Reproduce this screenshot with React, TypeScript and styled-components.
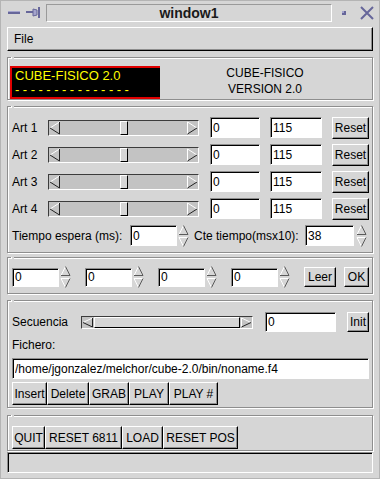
import React from 'react';
import styled, { createGlobalStyle } from 'styled-components';

const GRAY = '#d6d6d6';
const SHADOW = '#8e8e8e';
const WM = '#66669a';

const GlobalStyle = createGlobalStyle`
  html, body {
    margin: 0;
    padding: 0;
    background: ${GRAY};
  }
  body {
    font-family: "Liberation Sans", Arial, sans-serif;
    font-size: 12px;
    color: #000;
  }
`;

const Window = styled.div`
  width: 380px;
  height: 479px;
  box-sizing: border-box;
  background: ${GRAY};
  border: 1px solid #b4b4b4;
  display: flex;
  flex-direction: column;
`;

const TitleBar = styled.div`
  height: 23px;
  display: flex;
  align-items: center;
  padding-left: 7px;
`;

const IconSlot = styled.span<{ $ml: number }>`
  display: flex;
  margin-left: ${p => p.$ml}px;
`;

const TitleBox = styled.div`
  box-sizing: border-box;
  width: 286px;
  height: 18px;
  margin-left: 5px;
  border: 1px solid;
  border-color: #9a9a9a #fff #fff #9a9a9a;
  display: flex;
  align-items: center;
  justify-content: center;
  font-weight: bold;
  font-size: 14px;
  color: #1a1a1a;
`;

const Body = styled.div`
  display: flex;
  flex-direction: column;
  padding: 3px 6px 0;
`;

const MenuBar = styled.div`
  box-sizing: border-box;
  height: 24px;
  display: flex;
  align-items: center;
  padding-left: 6px;
  border: 1px solid;
  border-color: #fff #000 #000 #fff;
  box-shadow: inset -1px -1px 0 ${SHADOW};
`;

const Frame = styled.div<{ $mt: number; $h: number; $pt: number; $pl?: number }>`
  position: relative;
  box-sizing: border-box;
  margin-top: ${p => p.$mt}px;
  height: ${p => p.$h}px;
  padding: ${p => p.$pt}px 2px 0 ${p => p.$pl ?? 4}px;
  border: 1px solid ${SHADOW};
  box-shadow: inset 1px 1px 0 #fff, 1px 1px 0 #fff;
  display: flex;
  flex-direction: column;

  &::before {
    content: '';
    position: absolute;
    top: -1px;
    left: 3px;
    width: 2px;
    height: 2px;
    background: ${GRAY};
    border-left: 1px solid #fff;
  }
`;

const BannerRow = styled.div`
  display: flex;
  align-items: flex-start;
`;

const LedBox = styled.div`
  box-sizing: border-box;
  width: 150px;
  height: 33px;
  background: #000;
  border: 2px solid #e00000;
  border-right: none;
  padding: 1px 0 0 3px;
  color: #ffff00;
  font-size: 13px;
  line-height: 14px;
  white-space: nowrap;
`;

const Dashes = styled.div`
  letter-spacing: 3.5px;
`;

const VersionText = styled.div`
  flex: 1;
  margin-top: -1px;
  text-align: center;
  line-height: 16px;
`;

const Rows = styled.div<{ $gap: number }>`
  display: flex;
  flex-direction: column;
  gap: ${p => p.$gap}px;
`;

const Row = styled.div<{ $h: number }>`
  display: flex;
  align-items: center;
  height: ${p => p.$h}px;
`;

const Label = styled.span<{ $w?: number; $ml?: number }>`
  flex-shrink: 0;
  ${p => (p.$w ? `width: ${p.$w}px;` : '')}
  margin-left: ${p => p.$ml ?? 0}px;
  white-space: nowrap;
`;

const FieldLabel = styled.div`
  height: 26px;
  display: flex;
  align-items: center;
`;

const Entry = styled.input<{ $w: number; $h?: number; $ml?: number }>`
  box-sizing: border-box;
  flex-shrink: 0;
  width: ${p => p.$w}px;
  height: ${p => p.$h ?? 21}px;
  margin: 0 0 0 ${p => p.$ml ?? 0}px;
  padding: 0 0 0 2px;
  background: #fff;
  border: 1px solid;
  border-color: ${SHADOW} #fff #fff ${SHADOW};
  box-shadow: inset 1px 1px 0 #000;
  font-family: inherit;
  font-size: 12px;
  color: #000;
  outline: none;
`;

const Button = styled.button<{ $w: number; $h?: number; $ml?: number }>`
  box-sizing: border-box;
  flex-shrink: 0;
  width: ${p => p.$w}px;
  height: ${p => p.$h ?? 22}px;
  margin: 0 0 0 ${p => p.$ml ?? 0}px;
  padding: 0;
  background: ${GRAY};
  border: 1px solid;
  border-color: #fff #000 #000 #fff;
  box-shadow: inset -1px -1px 0 ${SHADOW};
  font-family: inherit;
  font-size: 12px;
  color: #000;
  white-space: nowrap;
  overflow: hidden;
`;

const ButtonStrip = styled.div<{ $mt?: number }>`
  display: flex;
  margin-top: ${p => p.$mt ?? 0}px;
`;

const Trough = styled.div<{ $w: number; $h: number }>`
  box-sizing: border-box;
  flex-shrink: 0;
  width: ${p => p.$w}px;
  height: ${p => p.$h}px;
  display: flex;
  background: #c3c3c3;
  border: 1px solid;
  border-color: #3c3c3c #fff #fff #3c3c3c;
`;

const Thumb = styled.div<{ $fill?: boolean }>`
  box-sizing: border-box;
  ${p => (p.$fill ? 'flex: 1;' : 'width: 8px;')}
  background: ${GRAY};
  border: 1px solid;
  border-color: #fff #000 #000 #fff;
`;

const Gap = styled.div`
  flex: 1;
`;

const StatusBar = styled.div`
  box-sizing: border-box;
  margin-top: 1px;
  height: 21px;
  border: 1px solid;
  border-color: ${SHADOW} #fff #fff ${SHADOW};
  box-shadow: inset 1px 1px 0 #000;
`;

const MinimizeIcon = () => (
  <svg width="12" height="4" viewBox="0 0 12 4">
    <rect x="0" y="0" width="12" height="3" fill={WM} />
    <rect x="0" y="0" width="12" height="1" fill="#a4a4cc" />
  </svg>
);

const PinIcon = () => (
  <svg width="15" height="11" viewBox="0 0 15 11">
    <rect x="0" y="4" width="7" height="2" fill={WM} />
    <polygon points="7,2 11,3 11,8 7,9" fill="#a4a4cc" stroke={WM} strokeWidth="1" />
    <rect x="12" y="0" width="2" height="11" fill={WM} />
  </svg>
);

const DotIcon = () => (
  <svg width="4" height="4" viewBox="0 0 4 4">
    <rect x="0" y="0" width="4" height="4" fill={WM} />
    <rect x="0" y="0" width="2" height="2" fill="#a4a4cc" />
  </svg>
);

const CloseIcon = () => (
  <svg width="14" height="14" viewBox="0 0 14 14">
    <path d="M1 1 L13 13 M13 1 L1 13" stroke={WM} strokeWidth="2" />
  </svg>
);

const ArrowLeft = ({ h }: { h: number }) => {
  const m = h / 2;
  return (
    <svg width="12" height={h} viewBox={`0 0 12 ${h}`}>
      <path d={`M10.5 1 L1 ${m}`} stroke="#fff" strokeWidth="1" fill="none" />
      <path d={`M1 ${m} L10.5 ${h - 1} M10.5 1 L10.5 ${h - 1}`} stroke="#222" strokeWidth="1" fill="none" />
    </svg>
  );
};

const ArrowRight = ({ h }: { h: number }) => {
  const m = h / 2;
  return (
    <svg width="12" height={h} viewBox={`0 0 12 ${h}`}>
      <path d={`M1.5 ${h - 1} L1.5 1 L11 ${m}`} stroke="#fff" strokeWidth="1" fill="none" />
      <path d={`M11 ${m} L1.5 ${h - 1}`} stroke="#222" strokeWidth="1" fill="none" />
    </svg>
  );
};

const Slider = ({ w, h, fill }: { w: number; h: number; fill?: boolean }) => (
  <Trough $w={w} $h={h}>
    <ArrowLeft h={h - 2} />
    {fill ? (
      <Thumb $fill />
    ) : (
      <>
        <Gap />
        <Thumb />
        <Gap />
      </>
    )}
    <ArrowRight h={h - 2} />
  </Trough>
);

const SpinArrows = ({ ml }: { ml: number }) => (
  <IconSlot $ml={ml}>
    <svg width="11" height="24" viewBox="0 0 11 24">
      <polygon points="5.5,1.5 10,10.5 1,10.5" fill={GRAY} />
      <path d="M1 10.5 L5.5 1.5" stroke="#fff" strokeWidth="1" fill="none" />
      <path d="M5.5 1.5 L10 10.5 L1 10.5" stroke="#5a5a5a" strokeWidth="1" fill="none" />
      <polygon points="1,13.5 10,13.5 5.5,22.5" fill={GRAY} />
      <path d="M10 13.5 L1 13.5 L5.5 22.5" stroke="#fff" strokeWidth="1" fill="none" />
      <path d="M5.5 22.5 L10 13.5" stroke="#5a5a5a" strokeWidth="1" fill="none" />
    </svg>
  </IconSlot>
);

const arts = ['Art 1', 'Art 2', 'Art 3', 'Art 4'];
const seqButtons: [string, number][] = [
  ['Insert', 35],
  ['Delete', 42],
  ['GRAB', 40],
  ['PLAY', 40],
  ['PLAY #', 49],
];
const mainButtons: [string, number][] = [
  ['QUIT', 33],
  ['RESET 6811', 77],
  ['LOAD', 41],
  ['RESET POS', 75],
];

const App: React.FC = () => {
  return (
    <>
      <GlobalStyle />
      <Window>
        <TitleBar>
          <MinimizeIcon />
          <IconSlot $ml={6}>
            <PinIcon />
          </IconSlot>
          <TitleBox>window1</TitleBox>
          <IconSlot $ml={10}>
            <DotIcon />
          </IconSlot>
          <IconSlot $ml={14}>
            <CloseIcon />
          </IconSlot>
        </TitleBar>

        <Body>
          <MenuBar>File</MenuBar>

          <Frame $mt={6} $h={43} $pt={8} $pl={2}>
            <BannerRow>
              <LedBox>
                <div>CUBE-FISICO 2.0</div>
                <Dashes>---------------</Dashes>
              </LedBox>
              <VersionText>
                CUBE-FISICO
                <br />
                VERSION 2.0
              </VersionText>
            </BannerRow>
          </Frame>

          <Frame $mt={6} $h={147} $pt={10}>
            <Rows $gap={6}>
              {arts.map(name => (
                <Row $h={21} key={name}>
                  <Label $w={36}>{name}</Label>
                  <Slider w={151} h={16} />
                  <Entry $w={50} $ml={11} readOnly value="0" />
                  <Entry $w={52} $ml={10} readOnly value="115" />
                  <Button $w={37} $ml={10}>Reset</Button>
                </Row>
              ))}
              <Row $h={21}>
                <Label $w={118}>Tiempo espera (ms):</Label>
                <Entry $w={47} readOnly value="0" />
                <SpinArrows ml={1} />
                <Label $w={111} $ml={5}>Cte tiempo(msx10):</Label>
                <Entry $w={49} readOnly value="38" />
                <SpinArrows ml={2} />
              </Row>
            </Rows>
          </Frame>

          <Frame $mt={4} $h={37} $pt={9}>
            <Row $h={20}>
              {[0, 1, 2, 3].map(i => (
                <React.Fragment key={i}>
                  <Entry $w={47} $h={19} $ml={i === 0 ? 0 : 14} readOnly value="0" />
                  <SpinArrows ml={1} />
                </React.Fragment>
              ))}
              <Button $w={32} $h={20} $ml={14}>Leer</Button>
              <Button $w={25} $h={20} $ml={8}>OK</Button>
            </Row>
          </Frame>

          <Frame $mt={6} $h={108} $pt={11}>
            <Row $h={20}>
              <Label $w={69}>Secuencia</Label>
              <Slider w={172} h={13} fill />
              <Entry $w={71} $h={20} $ml={12} readOnly value="0" />
              <Button $w={22} $h={20} $ml={11}>Init</Button>
            </Row>
            <FieldLabel>Fichero:</FieldLabel>
            <Entry $w={357} readOnly value="/home/jgonzalez/melchor/cube-2.0/bin/noname.f4" />
            <ButtonStrip $mt={3}>
              {seqButtons.map(([text, w]) => (
                <Button key={text} $w={w} $h={23}>
                  {text}
                </Button>
              ))}
            </ButtonStrip>
          </Frame>

          <Frame $mt={7} $h={36} $pt={10}>
            <ButtonStrip>
              {mainButtons.map(([text, w]) => (
                <Button key={text} $w={w} $h={23}>
                  {text}
                </Button>
              ))}
            </ButtonStrip>
          </Frame>

          <StatusBar />
        </Body>
      </Window>
    </>
  );
};

export default App;
